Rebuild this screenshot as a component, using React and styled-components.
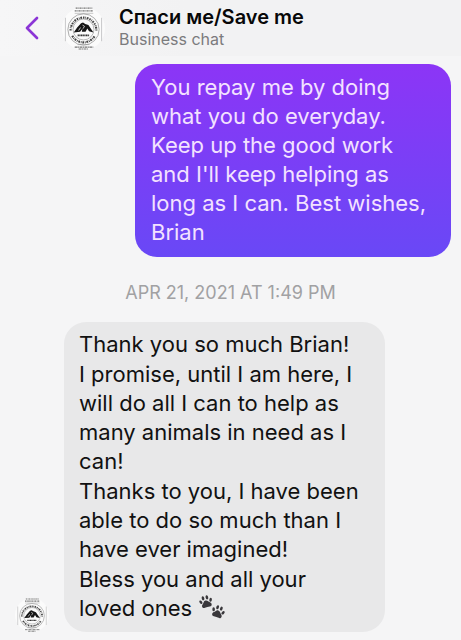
import React from "react";
import styled, { createGlobalStyle } from "styled-components";

const Global = createGlobalStyle`
  * { box-sizing: border-box; }
  body {
    margin: 0;
    background: #f5f5f6;
    font-family: Inter, "Liberation Sans", sans-serif;
  }
`;

const Page = styled.main`
  min-height: 100vh;
  background: #f5f5f6;
`;

const Header = styled.header`
  display: flex;
  align-items: center;
  height: 56px;
  padding-left: 20px;
  background: linear-gradient(90deg, #f6f6f7, #f2f2f3 40%);
`;

const BackButton = styled.button`
  display: flex;
  width: 22px;
  height: 32px;
  padding: 4px 2px;
  border: 0;
  background: none;
  cursor: pointer;
`;

const Avatar = styled.svg`
  flex: none;
  width: ${({ $size }) => $size}px;
  height: ${({ $size }) => $size}px;
`;

const HeaderAvatar = styled.div`
  display: flex;
  margin: 0 14px 0 20px;
`;

const Title = styled.h1`
  margin: 0;
  color: #080808;
  font-size: 20px;
  font-weight: 600;
  line-height: 23px;
`;

const Subtitle = styled.p`
  margin: 0;
  color: #7b7b7d;
  font-size: 16px;
  line-height: 21px;
`;

const Thread = styled.section`
  display: flex;
  flex-direction: column;
  padding: 8px 0;
`;

const Row = styled.div`
  display: flex;
  align-items: flex-end;
  gap: 15px;
  padding: 0 10px 0 15px;
  justify-content: ${({ $sent }) => ($sent ? "flex-end" : "flex-start")};
`;

const Bubble = styled.article`
  display: flex;
  flex-direction: column;
  gap: 1px;
  width: 100%;
  max-width: ${({ $sent }) => ($sent ? 316 : 321)}px;
  padding: ${({ $sent }) => ($sent ? "9px 15px 10px 16px" : "8px 20px 9px 15px")};
  border-radius: 22px;
  color: ${({ $sent }) => ($sent ? "#f3e2ff" : "#111")};
  background: ${({ $sent }) =>
    $sent ? "linear-gradient(#8c35f6, #6948f6)" : "#e8e8e9"};
`;

const Text = styled.p`
  margin: 0;
  font-size: 22px;
  line-height: 29px;
`;

const Timestamp = styled.time`
  padding: 24px 0 17px;
  color: #a1a1a3;
  font-size: 18px;
  line-height: 24px;
  text-align: center;
`;

const Paws = styled.svg`
  width: 28px;
  height: 26px;
  vertical-align: -4px;
`;

function Logo({ size }) {
  return (
    <Avatar $size={size} viewBox="0 0 44 44" role="img" aria-label="Save me logo">
      <circle cx="22" cy="22" r="22" fill="#fbfbfb" />
      <g fill="none" stroke="#777">
        <path d="M14 1.2h17M13 4h19" strokeWidth="1.4" strokeDasharray="2 .7 1 .4" />
        <path d="M13 6.5h19M16 38.5h12" stroke="#bbb" strokeWidth=".8" />
        <path d="M13 41h19M17 43h10" strokeWidth="1.2" strokeDasharray="3 .5 1 .5" />
        <path d="M3.5 11v24M40.5 11v24" stroke="#c7c7c9" />
        <circle cx="22" cy="23" r="16" stroke="#888" strokeWidth=".7" />
        <circle cx="22" cy="23" r="10.7" stroke="#888" strokeWidth=".6" />
        <path d="M8.8 24a13.2 13.2 0 0 1 26.4 0" stroke="#444" strokeWidth="2.2" strokeDasharray="1.5 .9 .7 .8 1.8 1" />
        <path d="M10.5 29.5a13.2 13.2 0 0 0 23 0" stroke="#444" strokeWidth="2.2" strokeDasharray="1.8 .8 .8 .8" />
      </g>
      <path d="M12 26 15.5 21l4-4.5 2-.6 2.3 1.4 3.2 1 5.2 7.7-4.5-1.2-1.8-2.8-1.8 3.2h-3.8l.6-3-2.4 3.2z" fill="#161616" />
      <path d="m21 18.5 2 1.2-1.5 2.5M17 24l2-3" fill="none" stroke="#eee" strokeWidth=".8" />
      <path d="M16 29h12" stroke="#333" strokeWidth="1.7" strokeDasharray="1.3 .4" />
    </Avatar>
  );
}

function Paw() {
  return (
    <>
      <path d="M-.2-1.5c2.2 0 2.4 1.7 4 2.7 2.1 1.4 1.3 4.5-1.2 4.1-1.7-.3-3.2-.3-5 0-2.5.4-3.4-2.5-1.3-4 1.6-1.1 1.4-2.8 3.5-2.8z" />
      <ellipse cx="-5" cy="-1" rx="1.3" ry="2" transform="rotate(-22 -5 -1)" />
      <ellipse cx="-2" cy="-4.3" rx="1.3" ry="2.1" />
      <ellipse cx="2" cy="-4.3" rx="1.3" ry="2.1" />
      <ellipse cx="5" cy="-1" rx="1.3" ry="2" transform="rotate(22 5 -1)" />
    </>
  );
}

export default function App() {
  return (
    <Page>
      <Global />
      <Header>
        <BackButton aria-label="Back">
          <svg width="18" height="24" viewBox="0 0 18 24" fill="none" aria-hidden="true">
            <path d="M15 2 5 12l10 10" stroke="#8b35d6" strokeWidth="2.7" strokeLinecap="round" strokeLinejoin="round" />
          </svg>
        </BackButton>
        <HeaderAvatar>
          <Logo size={43} />
        </HeaderAvatar>
        <div>
          <Title>Спаси ме/Save me</Title>
          <Subtitle>Business chat</Subtitle>
        </div>
      </Header>
      <Thread>
        <Row $sent>
          <Bubble $sent>
            <Text>
              You repay me by doing what you do everyday. Keep up the good work
              and I'll keep helping as long as I can. Best wishes, Brian
            </Text>
          </Bubble>
        </Row>
        <Timestamp dateTime="2021-04-21T13:49">APR 21, 2021 AT 1:49 PM</Timestamp>
        <Row>
          <Logo size={34} />
          <Bubble>
            <Text>Thank you so much Brian!</Text>
            <Text>
              I promise, until I am here, I will do all I can to help as many
              animals in need as I can!
            </Text>
            <Text>
              Thanks to you, I have been able to do so much than I have ever
              imagined!
            </Text>
            <Text>
              Bless you and all your loved ones{" "}
              <Paws viewBox="0 0 28 26" fill="#39373b" role="img" aria-label="paw prints">
                <g transform="translate(8 8) rotate(-14)"><Paw /></g>
                <g transform="translate(20 18) rotate(20)"><Paw /></g>
              </Paws>
            </Text>
          </Bubble>
        </Row>
      </Thread>
    </Page>
  );
}
